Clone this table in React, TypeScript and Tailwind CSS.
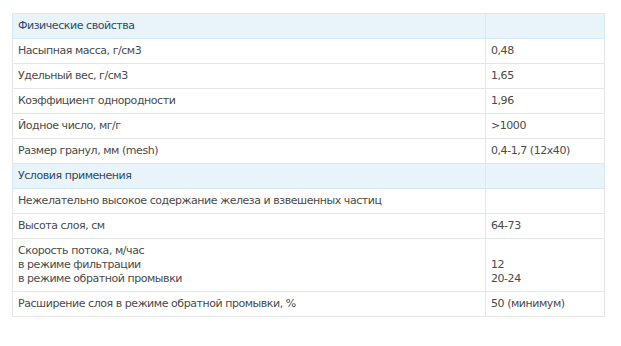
type Row =
  | { kind: 'head'; label: string }
  | { kind: 'row'; label: string[]; value: string[] }

const rows: Row[] = [
  { kind: 'head', label: 'Физические свойства' },
  { kind: 'row', label: ['Насыпная масса, г/см3'], value: ['0,48'] },
  { kind: 'row', label: ['Удельный вес, г/см3'], value: ['1,65'] },
  { kind: 'row', label: ['Коэффициент однородности'], value: ['1,96'] },
  { kind: 'row', label: ['Йодное число, мг/г'], value: ['>1000'] },
  { kind: 'row', label: ['Размер гранул, мм (mesh)'], value: ['0,4-1,7 (12x40)'] },
  { kind: 'head', label: 'Условия применения' },
  { kind: 'row', label: ['Нежелательно высокое содержание железа и взвешенных частиц'], value: [] },
  { kind: 'row', label: ['Высота слоя, см'], value: ['64-73'] },
  {
    kind: 'row',
    label: ['Скорость потока, м/час', 'в режиме фильтрации', 'в режиме обратной промывки'],
    value: ['', '12', '20-24'],
  },
  { kind: 'row', label: ['Расширение слоя в режиме обратной промывки, %'], value: ['50 (минимум)'] },
]

export default function App() {
  return (
    <div className="w-[621px] h-[346px] bg-white pt-[13px] pl-[12px] font-['DejaVu_Sans',sans-serif] text-[11px] leading-[14px] tracking-[-0.45px] text-[#4a4a4a]">
      <table className="w-[593px] border-collapse">
        <colgroup>
          <col className="w-[473px]" />
          <col />
        </colgroup>
        <tbody>
          {rows.map((r, i) =>
            r.kind === 'head' ? (
              <tr key={i} className="bg-[#e8f3fa] text-[#2f4a66]">
                <td className="border border-[#d5e8f5] px-[5px] py-[5px]">{r.label}</td>
                <td className="border border-[#d5e8f5] px-[5px] py-[5px]"></td>
              </tr>
            ) : (
              <tr key={i}>
                <td className="border border-[#e6e6e6] px-[5px] py-[5px] align-top">
                  {r.label.map((l, j) => (
                    <div key={j}>{l}</div>
                  ))}
                </td>
                <td className="border border-[#e6e6e6] px-[5px] py-[5px] align-top">
                  {r.value.map((v, j) => (
                    <div key={j} className="h-[14px]">{v}</div>
                  ))}
                </td>
              </tr>
            ),
          )}
        </tbody>
      </table>
    </div>
  )
}
